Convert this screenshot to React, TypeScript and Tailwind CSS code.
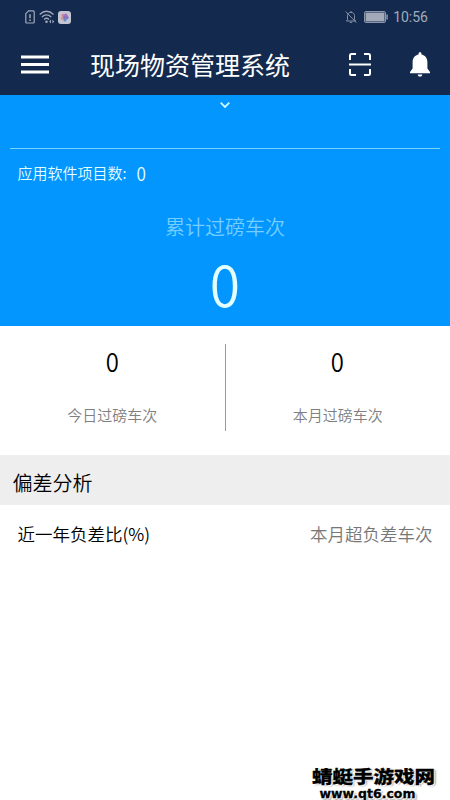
import type { ReactNode } from 'react'

/* ================= ICONS ================= */
function SimIcon() {
  return (
    <svg width="10" height="14" viewBox="0 0 10 14" fill="none" stroke="#a2aaba" strokeWidth="1.2">
      <path d="M3.6 .9H8.2Q9.2 .9 9.2 1.9V12Q9.2 13 8.2 13H1.8Q.8 13 .8 12V3.7Z" />
      <path d="M5 4.2V8.2M5 9.5V11" strokeWidth="1.5" />
    </svg>
  )
}

function WifiIcon() {
  return (
    <svg width="16" height="14" viewBox="0 0 16 14" fill="none" stroke="#a2aaba" strokeWidth="1.3">
      <path d="M.7 4.5Q7.5 -2 14.5 4.5M2.9 7Q7.5 2.8 12.3 7M5.1 9.4Q7.5 7.2 10 9.4" />
      <circle cx="7.5" cy="11.8" r="1.3" fill="#a2aaba" stroke="none" />
      <path d="M12 9.6V13.4L10.2 11.5ZM13.4 9.6V13.4L15.2 11.5Z" fill="#a2aaba" stroke="none" />
    </svg>
  )
}

function AppIcon() {
  return (
    <svg width="13" height="13" viewBox="0 0 13 13">
      <rect width="13" height="13" rx="3" fill="#c3c6d2" />
      <circle cx="5.2" cy="4.5" r="1.7" fill="#d27f9b" />
      <circle cx="7.8" cy="4.3" r="1.7" fill="#a372c0" />
      <circle cx="9" cy="6.6" r="1.7" fill="#7875cc" />
      <circle cx="7" cy="8.7" r="1.7" fill="#5b91c9" />
      <circle cx="4.4" cy="7.3" r="1.7" fill="#cf9694" />
      <circle cx="6.5" cy="6.5" r="1.4" fill="#9a69b4" />
    </svg>
  )
}

function MutedIcon() {
  return (
    <svg width="12" height="14" viewBox="0 0 12 14" fill="none" stroke="#8791a7" strokeWidth="1">
      <path d="M2.5 9.7V5.6C2.5 3.7 4 2.4 6 2.4S9.5 3.7 9.5 5.6V9.7L10.6 11H1.4ZM6 1V2.4M4.8 12.4H7.2M.6 1.5L11.4 12.7" />
    </svg>
  )
}

function BatteryIcon() {
  return (
    <svg width="24" height="12" viewBox="0 0 24 12">
      <rect x=".5" y=".5" width="21" height="11" rx="1.5" fill="none" stroke="#8c96aa" />
      <rect x="1.5" y="1.5" width="19" height="9" fill="#a2aaba" />
      <path d="M22.3 3.5H23.8V8.5H22.3Z" fill="#8c96aa" />
    </svg>
  )
}

function MenuIcon() {
  return (
    <svg width="28" height="19" viewBox="0 0 28 19" fill="#fff">
      <path d="M0 .5H28V3.5H0ZM0 8H28V11H0ZM0 15.5H28V18.5H0Z" />
    </svg>
  )
}

function ScanIcon() {
  return (
    <svg width="22" height="23" viewBox="0 0 22 23" fill="none" stroke="#fff" strokeWidth="2">
      <path d="M1 7V2.5Q1 1 2.5 1H7M15 1H19.5Q21 1 21 2.5V7M21 16V20.5Q21 22 19.5 22H15M7 22H2.5Q1 22 1 20.5V16M0 11.5H22" />
    </svg>
  )
}

function BellIcon() {
  return (
    <svg width="20" height="25" viewBox="0 0 20 25" fill="#fff">
      <path d="M8.6 2.4V1.5C8.6 .7 9.2 .2 10 .2S11.4 .7 11.4 1.5V2.4C15 3 17.4 6 17.4 10V16.5L20 20V21.2H0V20L2.6 16.5V10C2.6 6 5 3 8.6 2.4ZM7.7 22.4H12.3C12 23.9 11.2 24.6 10 24.6S8 23.9 7.7 22.4Z" />
    </svg>
  )
}

/* ================= PARTS ================= */
function Stat({ value, children }: { value: number; children: ReactNode }) {
  return (
    <div className="flex flex-1 flex-col items-center">
      <span className="mt-[17px] scale-x-90 text-[26.5px] leading-9 text-black">{value}</span>
      <span className="mt-[26px] text-[15px] leading-5 text-[#808080]">{children}</span>
    </div>
  )
}

/* ================= SCREEN ================= */
export default function App() {
  return (
    <div className="relative flex h-[800px] w-[450px] flex-col overflow-hidden bg-white font-['Noto_Sans_CJK_SC',sans-serif] font-[350]">
      <header className="h-[95px] bg-[#132a4e]">
        <div className="flex h-[34px] items-center pr-[22px] pl-[25px]">
          <div className="flex items-center gap-[3.5px]">
            <SimIcon />
            <WifiIcon />
            <AppIcon />
          </div>
          <div className="ml-auto flex items-center">
            <MutedIcon />
            <span className="ml-[7px]"><BatteryIcon /></span>
            <span className="ml-[5px] font-['Roboto',sans-serif] text-[14px] leading-4 font-normal text-[#a2aaba]">10:56</span>
          </div>
        </div>
        <div className="flex h-[61px] items-center pr-5 pl-[21px]">
          <MenuIcon />
          <h1 className="ml-[41px] pb-0.5 text-[25px] leading-9 font-normal text-white">现场物资管理系统</h1>
          <span className="ml-auto"><ScanIcon /></span>
          <span className="ml-[39px]"><BellIcon /></span>
        </div>
      </header>

      <section className="flex h-[231px] flex-col bg-[#0396ff] text-[#e3ffff]">
        <div className="mx-[10px] flex h-[54px] justify-center border-b border-[#78d4ff] pt-[7px]">
          <svg width="10" height="6" viewBox="0 0 10 6" fill="none" stroke="#c9ffff" strokeWidth="1.8">
            <path d="M.7 .7L5 5L9.3 .7" />
          </svg>
        </div>
        <div className="mt-3 flex h-6 items-center pl-[17.5px]">
          <span className="pt-px text-[15px]">应用软件项目数:</span>
          <span className="ml-[9px] scale-x-90 text-[19px]">0</span>
        </div>
        <span className="mt-7 text-center text-[20px] leading-7 text-[#74ceff]">累计过磅车次</span>
        <span className="mt-[9px] scale-x-95 text-center text-[58px] leading-[64px]">0</span>
      </section>

      <section className="flex h-[129px]">
        <Stat value={0}>今日过磅车次</Stat>
        <div className="mt-[18px] h-[87px] w-px bg-[#999]" />
        <Stat value={0}>本月过磅车次</Stat>
      </section>

      <h2 className="flex h-[50px] items-center bg-[#eee] pt-1.5 pl-[12.5px] text-[20px] text-black">偏差分析</h2>
      <div className="flex h-[58px] items-center justify-between pt-px pr-[17.5px] pl-[17.5px] text-[17.5px]">
        <span className="text-black">近一年负差比(%)</span>
        <span className="text-[#777]">本月超负差车次</span>
      </div>

      {/* site mark over the bottom corner */}
      <div className="absolute right-[15px] bottom-0 flex flex-col items-center text-black [text-shadow:1px_1px_0_#fff,-1px_-1px_0_#fff,2px_2px_2px_#999]">
        <span className="scale-y-85 text-[20.5px] leading-[23px] font-black [-webkit-text-stroke:0.3px_#000]">蜻蜓手游戏网</span>
        <span className="-ml-3 font-['DejaVu_Sans',sans-serif] text-[12.5px] leading-[13px] font-bold [-webkit-text-stroke:0.3px_#000]">www.qt6.com</span>
      </div>
    </div>
  )
}
